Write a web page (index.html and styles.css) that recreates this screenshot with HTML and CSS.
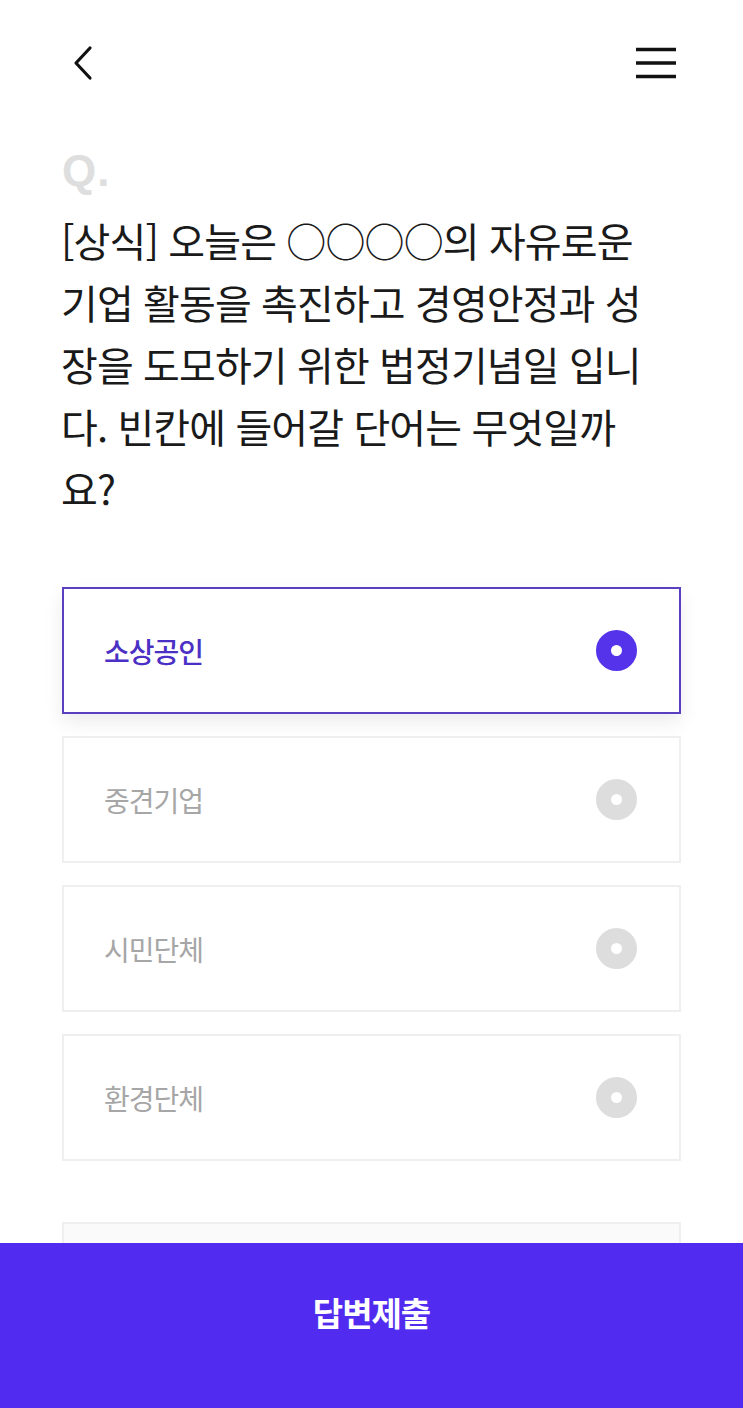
FILE: index.html
```html
<!DOCTYPE html>
<html lang="ko">
<head>
  <meta charset="UTF-8">
  <title>퀴즈</title>
  <meta name="viewport" content="width=device-width, initial-scale=1.0">
  <link rel="stylesheet" href="styles.css">
</head>
<body>
  <header class="top-bar">
    <a class="icon-btn back" href="#">
      <svg width="26" height="40" viewBox="0 0 26 40"><path d="M20 5 L6 20 L20 35" fill="none" stroke="#111" stroke-width="3.2" stroke-linecap="round" stroke-linejoin="round"/></svg>
    </a>
    <a class="icon-btn menu" href="#">
      <svg width="42" height="34" viewBox="0 0 42 34"><path d="M1 3.5 H41 M1 17 H41 M1 30.5 H41" stroke="#111" stroke-width="3.4"/></svg>
    </a>
  </header>

  <main class="container">
    <div class="q-mark">Q.</div>
    <p class="question">[상식] 오늘은 ○○○○의 자유로운<br>기업 활동을 촉진하고 경영안정과 성<br>장을 도모하기 위한 법정기념일 입니<br>다. 빈칸에 들어갈 단어는 무엇일까<br>요?</p>

    <ul class="options">
      <li class="option selected"><span>소상공인</span><i class="radio"></i></li>
      <li class="option"><span>중견기업</span><i class="radio"></i></li>
      <li class="option"><span>시민단체</span><i class="radio"></i></li>
      <li class="option"><span>환경단체</span><i class="radio"></i></li>
      <li class="option extra"><span></span></li>
    </ul>
  </main>

  <button class="submit-btn">답변제출</button>
</body>
</html>
```

FILE: styles.css
```css
body {
  margin: 0;
  font-family: "Noto Sans CJK KR", "Noto Sans", sans-serif;
  background: #ffffff;
  color: #111;
}
.top-bar {
  display: flex;
  justify-content: space-between;
  align-items: center;
  padding: 43px 66px 0 70px;
  height: 40px;
}
.icon-btn {
  display: block;
  line-height: 0;
}
.container {
  padding: 0 62px 0 62px;
}
.q-mark {
  margin-top: 66px;
  font-family: "Liberation Sans", Arial, sans-serif;
  font-weight: bold;
  font-size: 44px;
  line-height: 44px;
  color: #dedede;
  letter-spacing: 1px;
}
.question {
  margin: 16px 0 0 -1px;
  font-size: 40px;
  line-height: 62px;
  letter-spacing: -0.9px;
  white-space: nowrap;
  color: #1a1a1a;
}
.options {
  list-style: none;
  margin: 68px 0 0;
  padding: 0;
}
.option {
  display: flex;
  justify-content: space-between;
  align-items: center;
  box-sizing: border-box;
  height: 127px;
  margin-bottom: 22px;
  padding: 0 42px 0 40px;
  border: 2px solid #efefef;
  font-size: 28px;
  letter-spacing: -1px;
  color: #a6a6a6;
}
.option.selected {
  border-color: #5a3fc0;
  color: #4a30c4;
  font-weight: 500;
  box-shadow: 0 8px 18px rgba(0, 0, 0, 0.08);
}
.option.extra {
  background: #fafafa;
  margin-top: 61px;
}
.radio {
  width: 41px;
  height: 41px;
  box-sizing: border-box;
  border-radius: 50%;
  border: 15px solid #dddddd;
  background: #fff;
}
.selected .radio {
  border-color: #5433ea;
}
.submit-btn {
  position: fixed;
  left: 0;
  right: 0;
  bottom: 0;
  height: 165px;
  border: none;
  background: #512cf0;
  color: #fff;
  font-family: "Noto Sans CJK KR", sans-serif;
  font-size: 33px;
  font-weight: bold;
  letter-spacing: -1px;
  padding-bottom: 28px;
}
```
